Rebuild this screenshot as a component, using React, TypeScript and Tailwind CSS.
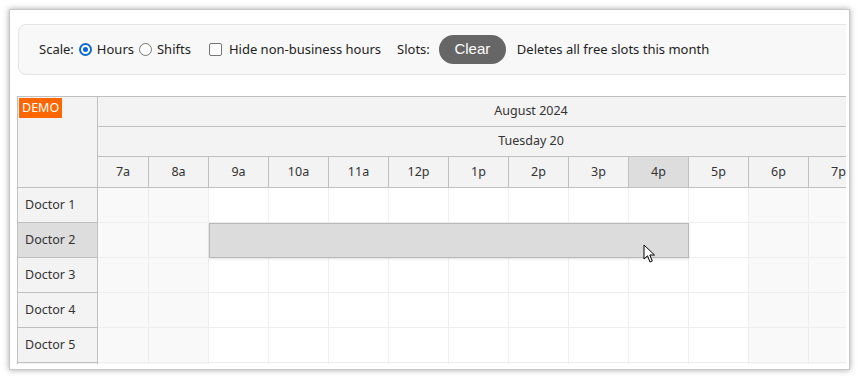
import React from 'react';

const hours = [
  { label: '7a', w: 51, off: true },
  { label: '8a', w: 60, off: true },
  { label: '9a', w: 60, off: false },
  { label: '10a', w: 60, off: false },
  { label: '11a', w: 60, off: false },
  { label: '12p', w: 60, off: false },
  { label: '1p', w: 60, off: false },
  { label: '2p', w: 60, off: false },
  { label: '3p', w: 60, off: false },
  { label: '4p', w: 60, off: false, hover: true },
  { label: '5p', w: 60, off: false },
  { label: '6p', w: 60, off: true },
  { label: '7p', w: 60, off: true },
  { label: '8p', w: 60, off: true },
];

const doctors = ['Doctor 1', 'Doctor 2', 'Doctor 3', 'Doctor 4', 'Doctor 5', 'Doctor 6'];

const Cursor = () => (
  <svg width="13" height="20" viewBox="0 0 13 20" className="absolute left-[545px] top-[56px]">
    <path d="M1 1 L1 15 L4.5 11.8 L7 18 L9.3 17 L6.8 11 L11.5 11 Z" fill="#fff" stroke="#000" strokeWidth="1" strokeLinejoin="round" />
  </svg>
);

const Toolbar = () => (
  <div className="ml-[8px] mt-[14px] h-[51px] w-[860px] shrink-0 rounded-[8px] border border-[#e3e3e3] bg-[#f8f8f8] pl-[20px] flex items-center text-[13px] text-[#222]">
    <span>Scale:</span>
    <span className="ml-[5px] w-[13px] h-[13px] rounded-full border-2 border-[#0b6bd3] bg-white box-border flex items-center justify-center">
      <span className="w-[5px] h-[5px] rounded-full bg-[#0b6bd3]" />
    </span>
    <span className="ml-[5px]">Hours</span>
    <span className="ml-[5px] w-[13px] h-[13px] rounded-full border border-[#767676] bg-white" />
    <span className="ml-[5px]">Shifts</span>
    <span className="ml-[18px] w-[13px] h-[13px] rounded-[2px] border border-[#767676] bg-white" />
    <span className="ml-[7px]">Hide non-business hours</span>
    <span className="ml-[16px]">Slots:</span>
    <button className="ml-[9px] h-[29px] w-[67px] rounded-full bg-[#666] text-white text-[15px] leading-[27px] pb-[2px] font-['Liberation_Sans',Arial,sans-serif]">
      Clear
    </button>
    <span className="ml-[11px]">Deletes all free slots this month</span>
  </div>
);

const Scheduler = () => (
  <div className="ml-[7px] mt-[21px] flex border-l border-t border-[#c0c0c0] text-[12.5px] text-[#333] w-[900px]">
    <div className="w-[80px] shrink-0 border-r border-[#c0c0c0]">
      <div className="relative h-[91px] bg-[#f3f3f3] border-b border-[#c0c0c0]">
        <span className="absolute left-[1px] top-[1px] h-[20px] px-[3px] bg-[#ff6600] text-white text-[12.5px] leading-[20px]">DEMO</span>
      </div>
      {doctors.map((d, i) => (
        <div
          key={d}
          className={`h-[35px] border-b border-[#c0c0c0] pl-[7px] flex items-center ${i === 1 ? 'bg-[#dddddd]' : 'bg-[#f3f3f3]'}`}
        >
          {i < 5 ? d : ''}
        </div>
      ))}
    </div>
    <div className="flex-1">
      <div className="bg-[#f3f3f3]">
        <div className="h-[30px] border-b border-[#c0c0c0] w-[866px] flex items-center justify-center">August 2024</div>
        <div className="h-[30px] border-b border-[#c0c0c0] w-[866px] flex items-center justify-center">Tuesday 20</div>
        <div className="h-[31px] border-b border-[#c0c0c0] flex">
          {hours.map((h) => (
            <div
              key={h.label}
              style={{ width: h.w }}
              className={`shrink-0 border-r border-[#c0c0c0] flex items-center justify-center ${h.hover ? 'bg-[#dddddd]' : ''}`}
            >
              {h.label}
            </div>
          ))}
        </div>
      </div>
      <div className="relative">
        {doctors.map((d) => (
          <div key={d} className="h-[35px] flex border-b border-[#eeeeee]">
            {hours.map((h) => (
              <div
                key={h.label}
                style={{ width: h.w }}
                className={`shrink-0 border-r border-[#eeeeee] ${h.off ? 'bg-[#f9f9f9]' : 'bg-white'}`}
              />
            ))}
          </div>
        ))}
        <div className="absolute left-[111px] top-[35px] w-[480px] h-[35px] border border-[#b8b8b8] bg-[#dcdcdc] shadow-[0_1px_2px_rgba(0,0,0,0.12)]" />
        <Cursor />
      </div>
    </div>
  </div>
);

export default function App() {
  return (
    <div className="w-[860px] h-[380px] bg-white pt-[9px] pl-[9px] font-['Noto_Sans','Open_Sans',sans-serif]">
      <div className="w-[841px] h-[361px] border border-[#c8c8c8] bg-white shadow-[0_0_6px_rgba(0,0,0,0.35)] overflow-hidden">
        <div className="w-[836px] h-[354px] overflow-hidden flex flex-col">
          <Toolbar />
          <Scheduler />
        </div>
      </div>
    </div>
  );
}
